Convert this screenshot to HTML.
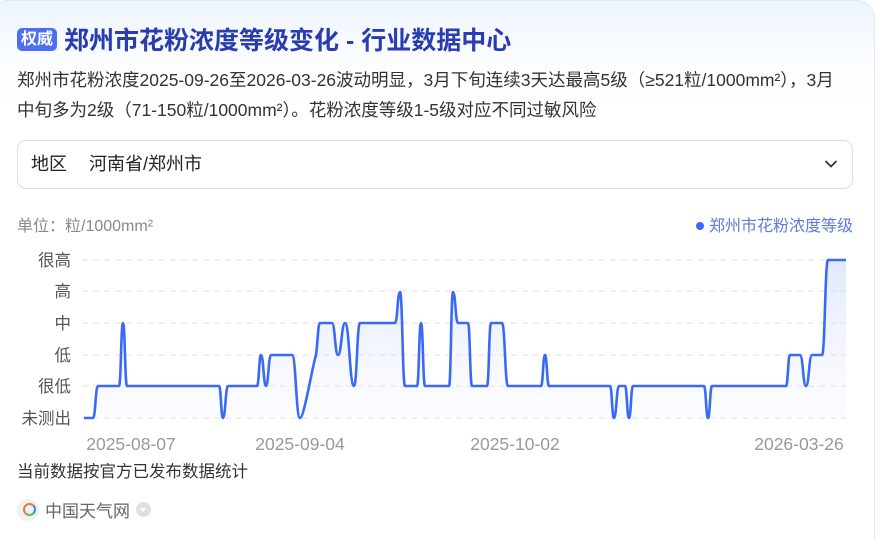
<!DOCTYPE html>
<html><head><meta charset="utf-8"><style>
*{margin:0;padding:0;box-sizing:border-box}
html,body{width:881px;height:540px;overflow:hidden}
body{background:#fff;font-family:"Liberation Sans","Noto Sans CJK SC",sans-serif}
.wrap{position:relative;width:881px;height:540px;overflow:hidden}
.card{position:absolute;left:-10px;top:0;width:885px;height:540px;border:1px solid #e3e8f3;border-bottom:none;border-radius:18px 18px 0 0;background:linear-gradient(180deg,#eef4fe 0,#fbfdff 60px,#fff 110px)}
.title{position:absolute;left:17px;top:21px;display:flex;align-items:center}
.badge{background:#4e6ef2;color:#fff;font-size:16px;font-weight:bold;border-radius:5px;padding:1px 4px;height:23px;line-height:21px;margin-right:7px}
.t{font-size:25px;font-weight:bold;color:#2a3db0}
.desc{position:absolute;left:17px;top:65px;width:850px;font-size:17.5px;line-height:30px;color:#333;white-space:nowrap}
.sel{position:absolute;left:17px;top:140px;width:836px;height:49px;border:1px solid #dcdfe6;border-radius:9px;font-size:18px;color:#222;line-height:47px;padding-left:13px}
.sel span{margin-left:22px}
.unit{position:absolute;left:17px;top:212px;font-size:16px;color:#8a8a8a}
.leg{position:absolute;right:28px;top:212px;font-size:16px;color:#5b7be0}
.leg i{display:inline-block;width:8px;height:8px;border-radius:50%;background:#3a6af5;margin-right:5px;vertical-align:1px}
.foot{position:absolute;left:17px;top:458px;font-size:16.5px;color:#333}
.src{position:absolute;left:17px;top:497px;font-size:17px;color:#666;display:flex;align-items:center}
.logo{width:22px;height:22px;border-radius:50%;background:#f0f0f0;margin-right:6px;position:relative}
.logo:after{content:"";position:absolute;left:6px;top:4px;width:9px;height:9px;border-radius:50%;border:2px solid #e9793c;border-right-color:#3a8be8;border-bottom-color:#5bbf4a}
.dn{width:15px;height:15px;border-radius:50%;background:#e0e0e0;margin-left:6px;position:relative}
.dn:after{content:"";position:absolute;left:4px;top:6px;border-left:3.5px solid transparent;border-right:3.5px solid transparent;border-top:4px solid #fff}
</style></head><body><div class="wrap">
<div class="card"></div>
<div class="title"><span class="badge">权威</span><span class="t">郑州市花粉浓度等级变化 - 行业数据中心</span></div>
<div class="desc">郑州市花粉浓度2025-09-26至2026-03-26波动明显，3月下旬连续3天达最高5级（≥521粒/1000mm²），3月<br>中旬多为2级（71-150粒/1000mm²）。花粉浓度等级1-5级对应不同过敏风险</div>
<div class="sel">地区<span>河南省/郑州市</span>
<svg style="position:absolute;right:14px;top:18px" width="14" height="10" viewBox="0 0 14 10"><path d="M1.5 2 L7 7.5 L12.5 2" fill="none" stroke="#333" stroke-width="1.8"/></svg></div>
<div class="unit">单位：粒/1000mm²</div>
<div class="leg"><i></i>郑州市花粉浓度等级</div>
<svg style="position:absolute;left:0;top:0" width="881" height="540">
<defs><linearGradient id="g" x1="0" y1="0" x2="0" y2="1"><stop offset="0" stop-color="#c9d6fb" stop-opacity=".55"/><stop offset="1" stop-color="#eef2fe" stop-opacity=".2"/></linearGradient></defs>
<g stroke="#e6e6e6" stroke-dasharray="6,5" stroke-width="1.2">
<line x1="82" y1="260" x2="846" y2="260"/><line x1="82" y1="291" x2="846" y2="291"/><line x1="82" y1="323" x2="846" y2="323"/><line x1="82" y1="355" x2="846" y2="355"/><line x1="82" y1="386" x2="846" y2="386"/><line x1="82" y1="418" x2="846" y2="418"/></g>
<g font-size="16.5" fill="#555" text-anchor="end" font-family="Liberation Sans,Noto Sans CJK SC,sans-serif">
<text x="71" y="266">很高</text><text x="71" y="297">高</text><text x="71" y="329">中</text><text x="71" y="361">低</text><text x="71" y="392">很低</text><text x="71" y="424">未测出</text></g>
<g font-size="17.5" fill="#999" text-anchor="middle" font-family="Liberation Sans,sans-serif">
<text x="131" y="450">2025-08-07</text><text x="300" y="450">2025-09-04</text><text x="515" y="450">2025-10-02</text><text x="799" y="450">2026-03-26</text></g>
<path fill="url(#g)" d="M84,418 L93,418 C95.5,418 95.5,386 98,386 L119,386 C121,386 121,323 123,323 C125,323 125,386 127,386 L219,386 C221,386 221,418 223,418 C225.5,418 225.5,386 228,386 L257,386 C259,386 259,355 261,355 C263.5,355 263.5,386 266,386 C268.5,386 268.5,355 271,355 L292,355 C296,355 296,418 300,418 C304,418 312,368 316,355 C318,340 318,323 320,323 L332,323 C335,323 335,355 338,355 C341.5,355 341.5,323 345,323 C349.5,323 349.5,386 354,386 C357,386 357,323 360,323 L395,323 C397.5,323 397.5,292 400,292 C402.5,292 402.5,386 405,386 L417,386 C419,386 419,323 421,323 C423,323 423,386 425,386 L449,386 C451,386 451,292 453,292 C455.5,292 455.5,323 458,323 L468,323 C470,323 470,386 472,386 L487,386 C489,386 489,323 491,323 L502,323 C505,323 505,386 508,386 L541,386 C543,386 543,355 545,355 C547,355 547,386 549,386 L610,386 C612,386 612,418 614,418 C616.5,418 616.5,386 619,386 L625,386 C627,386 627,418 629,418 C631,418 631,386 633,386 L704,386 C706,386 706,418 708,418 C710,418 710,386 712,386 L786,386 C788,386 788,355 790,355 L800,355 C803,355 803,386 806,386 C809,386 809,355 812,355 L822,355 C825,355 825,260 828,260 L846,260 L846,418 Z"/>
<path fill="none" stroke="#3a6af5" stroke-width="2.6" stroke-linejoin="round" d="M84,418 L93,418 C95.5,418 95.5,386 98,386 L119,386 C121,386 121,323 123,323 C125,323 125,386 127,386 L219,386 C221,386 221,418 223,418 C225.5,418 225.5,386 228,386 L257,386 C259,386 259,355 261,355 C263.5,355 263.5,386 266,386 C268.5,386 268.5,355 271,355 L292,355 C296,355 296,418 300,418 C304,418 312,368 316,355 C318,340 318,323 320,323 L332,323 C335,323 335,355 338,355 C341.5,355 341.5,323 345,323 C349.5,323 349.5,386 354,386 C357,386 357,323 360,323 L395,323 C397.5,323 397.5,292 400,292 C402.5,292 402.5,386 405,386 L417,386 C419,386 419,323 421,323 C423,323 423,386 425,386 L449,386 C451,386 451,292 453,292 C455.5,292 455.5,323 458,323 L468,323 C470,323 470,386 472,386 L487,386 C489,386 489,323 491,323 L502,323 C505,323 505,386 508,386 L541,386 C543,386 543,355 545,355 C547,355 547,386 549,386 L610,386 C612,386 612,418 614,418 C616.5,418 616.5,386 619,386 L625,386 C627,386 627,418 629,418 C631,418 631,386 633,386 L704,386 C706,386 706,418 708,418 C710,418 710,386 712,386 L786,386 C788,386 788,355 790,355 L800,355 C803,355 803,386 806,386 C809,386 809,355 812,355 L822,355 C825,355 825,260 828,260 L846,260"/>
</svg>
<div class="foot">当前数据按官方已发布数据统计</div>
<div class="src"><div class="logo"></div>中国天气网<div class="dn"></div></div>
</div></body></html>
